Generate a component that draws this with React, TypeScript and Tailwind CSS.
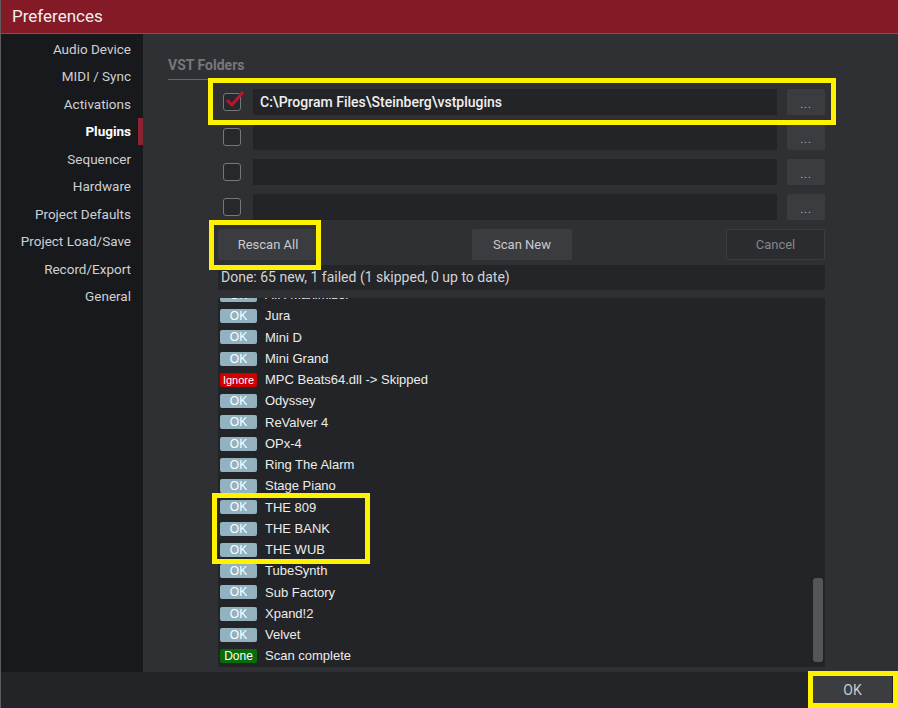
import type { ReactNode } from "react";

type TStatus = "ok" | "ignore" | "done";

const navItems = [
  "Audio Device",
  "MIDI / Sync",
  "Activations",
  "Plugins",
  "Sequencer",
  "Hardware",
  "Project Defaults",
  "Project Load/Save",
  "Record/Export",
  "General",
];

const folders = ["C:\\Program Files\\Steinberg\\vstplugins", "", "", ""];

const results: { status: TStatus; name: string }[] = [
  { status: "ok", name: "AIR Maximizer" },
  { status: "ok", name: "Jura" },
  { status: "ok", name: "Mini D" },
  { status: "ok", name: "Mini Grand" },
  { status: "ignore", name: "MPC Beats64.dll -> Skipped" },
  { status: "ok", name: "Odyssey" },
  { status: "ok", name: "ReValver 4" },
  { status: "ok", name: "OPx-4" },
  { status: "ok", name: "Ring The Alarm" },
  { status: "ok", name: "Stage Piano" },
  { status: "ok", name: "THE 809" },
  { status: "ok", name: "THE BANK" },
  { status: "ok", name: "THE WUB" },
  { status: "ok", name: "TubeSynth" },
  { status: "ok", name: "Sub Factory" },
  { status: "ok", name: "Xpand!2" },
  { status: "ok", name: "Velvet" },
  { status: "done", name: "Scan complete" },
];

const Badge = ({ status }: { status: TStatus }) => {
  if (status === "ignore")
    return (
      <span className="w-[37px] h-[14px] rounded-[2px] bg-[#d10000] text-white text-[11px] flex items-center justify-center">
        Ignore
      </span>
    );
  if (status === "done")
    return (
      <span className="w-[37px] h-[14px] rounded-[2px] bg-[#0a6b0a] text-white text-[12px] flex items-center justify-center">
        Done
      </span>
    );
  return (
    <span className="w-[37px] h-[14px] rounded-[2px] bg-[#92b2bf] text-white text-[12px] flex items-center justify-center">
      OK
    </span>
  );
};

const Button = ({ children, disabled }: { children: ReactNode; disabled?: boolean }) => (
  <button
    className={
      disabled
        ? "w-[99px] h-[31px] rounded-[2px] bg-[#2b2c2f] border border-[#3c3d41] text-[#85868a] text-[13px]"
        : "w-[100px] h-[31px] rounded-[2px] bg-[#3b3c40] text-[#c9cacd] text-[13px]"
    }
  >
    {children}
  </button>
);

const Mark = ({ className }: { className: string }) => (
  <div className={`absolute border-[5px] border-[#fff200] pointer-events-none ${className}`} />
);

export default function App() {
  return (
    <div className="relative w-[898px] h-[708px] overflow-hidden bg-[#232427] border-l border-[#5c5c5e] font-['Roboto',sans-serif]">
      <div className="h-[34px] bg-[#841a26] border-b border-[#5f5f62] flex items-center pl-[11px]">
        <span className="text-[17px] text-[#efefef] leading-none">Preferences</span>
      </div>

      <div className="flex h-[638px]">
        {/* sidebar */}
        <div className="w-[142px] bg-[#18191c] flex flex-col pt-[1px]">
          {navItems.map((item) => (
            <div key={item} className="h-[27.5px] flex items-center justify-end">
              <span
                className={
                  item === "Plugins"
                    ? "text-[13.5px] font-bold text-white mr-[7px]"
                    : "text-[13.5px] text-[#cfd0d2] mr-[7px]"
                }
              >
                {item}
              </span>
              <div className={item === "Plugins" ? "w-[5px] h-full bg-[#8a2431]" : "w-[5px] h-full"} />
            </div>
          ))}
        </div>

        {/* content */}
        <div className="flex-1 bg-[#2f3033] pl-[25px] pt-[22px]">
          <div className="w-[90px] border-b border-[#66676b] pb-[5px] text-[14px] leading-[18px] font-bold text-[#76777b]">
            VST Folders
          </div>

          <div className="ml-[50px] w-[607px] mt-[9px] flex flex-col gap-[9px]">
            {folders.map((path, i) => (
              <div key={i} className="flex items-center h-[26px]">
                <div className="w-[35px] flex items-center">
                  <div className="relative ml-[5px] w-[18px] h-[18px] rounded-[3px] border-[1.5px] border-[#76777b] bg-[#27282b]">
                    {path && (
                      <svg className="absolute left-[1px] top-[-5px]" width="20" height="20" viewBox="0 0 20 20">
                        <path d="M2 11 L7 16 L18 3" fill="none" stroke="#c0122b" strokeWidth="3" strokeLinejoin="round" />
                      </svg>
                    )}
                  </div>
                </div>
                <div className="flex-1 h-[26px] bg-[#232427] flex items-center pl-[7px]">
                  <span className="text-[14px] font-medium text-[#f0f0f0]">{path}</span>
                </div>
                <div className="ml-[10px] w-[38px] h-[26px] rounded-[2px] bg-[#3b3c40] flex items-end justify-center pb-[5px]">
                  <span className="text-[11px] tracking-[1px] text-[#b8b9bc] leading-none">...</span>
                </div>
              </div>
            ))}

            <div className="flex justify-between items-center">
              <Button>Rescan All</Button>
              <Button>Scan New</Button>
              <Button disabled>Cancel</Button>
            </div>
          </div>

          <div className="ml-[50px] w-[607px] mt-[5px] h-[25px] rounded-[2px] bg-[#242528] flex items-center pl-[3px]">
            <span className="text-[14px] text-[#d2d3d5]">Done: 65 new, 1 failed (1 skipped, 0 up to date)</span>
          </div>

          <div className="relative ml-[50px] w-[607px] mt-[8px] h-[369px] bg-[#232427] overflow-hidden font-['Liberation_Sans',Arial,sans-serif]">
            <div className="mt-[-13.75px]">
              {results.map((r) => (
                <div key={r.name} className="h-[21.25px] flex items-center pl-[2px] gap-[8px]">
                  <Badge status={r.status} />
                  <span className="text-[13px] text-[#ececec]">{r.name}</span>
                </div>
              ))}
            </div>
            <div className="absolute right-[2px] top-[280px] w-[10px] h-[84px] rounded-[3px] bg-[#55565a]" />
          </div>
        </div>
      </div>

      {/* bottom bar */}
      <div className="h-[36px] flex items-center justify-end pr-[6px]">
        <button className="w-[79px] h-[28px] bg-[#3c3d41] text-[#c9cacd] text-[14px]">OK</button>
      </div>

      {/* annotations */}
      <Mark className="left-[207px] top-[78px] w-[628px] h-[47px]" />
      <Mark className="left-[208px] top-[220px] w-[112px] h-[50px]" />
      <Mark className="left-[211px] top-[493px] w-[158px] h-[71px]" />
      <Mark className="left-[807px] top-[671px] w-[90px] h-[37px]" />
    </div>
  );
}
